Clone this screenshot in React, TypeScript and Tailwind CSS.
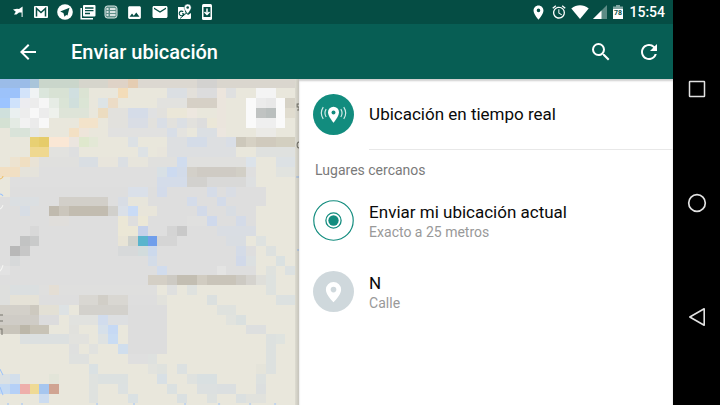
import React from "react";
import {
  MdAccessAlarm,
  MdArrowBack,
  MdImage,
  MdLocationOn,
  MdMail,
  MdRefresh,
  MdSearch,
} from "react-icons/md";

// Map tiles: [row, first column, number of columns, colour, number of rows]
type Tile = [number, number, number, string, number?];

const tiles: Tile[] = [
  // large neighbourhood areas
  [9, 4, 22, "#dfdfdf"],
  [10, 1, 25, "#dfdfdf"],
  [11, 1, 26, "#dedede"],
  [12, 0, 27, "#dedede"],
  [13, 0, 26, "#dedede", 8],
  [21, 0, 4, "#dedfdd", 2],
  [21, 4, 12, "#dfdfde"],
  [22, 4, 13, "#dedede"],
  [23, 13, 4, "#dddddd", 5],
  [28, 13, 2, "#dfdfdf"],
  [3, 11, 9, "#e2e1dd", 2],
  [5, 11, 6, "#e1e1e0"],
  [6, 17, 7, "#dddfe1", 2],
  [8, 4, 22, "#e0e0de"],
  // top edge
  [0, 0, 3, "#9bbce8"], [0, 3, 1, "#a9c5da"], [0, 4, 4, "#cad6cb"], [0, 8, 3, "#d6d5cc"],
  [0, 11, 2, "#dfd3c7"], [0, 13, 1, "#e5cdb2"], [0, 14, 6, "#dcd8d1"], [0, 20, 2, "#d3d2d0"], [0, 22, 8, "#dad6ce"],
  [1, 0, 2, "#9cc2fa"], [1, 2, 1, "#d3e3fa"], [1, 3, 1, "#f0f3f4"], [1, 4, 1, "#dbe6dc"], [1, 5, 2, "#d8e2d4"],
  [1, 7, 1, "#d0dfe0"], [1, 8, 1, "#dbe3d3"], [1, 12, 1, "#f3dcb8"], [1, 17, 2, "#dbdfe3"], [1, 19, 1, "#e3e0da"],
  [1, 20, 2, "#dcdcdd"], [1, 22, 1, "#ece5dd"], [1, 23, 1, "#dfe0e0"], [1, 26, 2, "#f4f4f4"],
  [2, 0, 1, "#9cc4ff"], [2, 1, 1, "#cfe2fb"], [2, 2, 1, "#ececf0"], [2, 3, 1, "#ececec"], [2, 4, 1, "#f6f6f6"],
  [2, 5, 1, "#e6ece5"], [2, 6, 1, "#dae4d6"], [2, 7, 1, "#d0dfdc"], [2, 8, 1, "#dbe5d5"], [2, 10, 1, "#dde4e6"],
  [2, 11, 1, "#ecdcc6"], [2, 16, 3, "#e2e2df"], [2, 19, 3, "#d6d0c6"], [2, 22, 1, "#ebe5dd"], [2, 25, 1, "#fafafa"],
  [2, 26, 1, "#ebebeb"], [2, 27, 1, "#e8e8e8"], [2, 28, 1, "#fafafa"], [2, 29, 1, "#d6d2c6"],
  [3, 0, 1, "#cfe0dc"], [3, 1, 1, "#eaf0f0"], [3, 2, 1, "#ededed"], [3, 3, 1, "#f8f8f8"], [3, 4, 1, "#ececec"],
  [3, 5, 1, "#eef1ec"], [3, 6, 3, "#dee4d8"], [3, 10, 1, "#ecdcc0"], [3, 13, 2, "#d5dce8"], [3, 17, 2, "#ebe7d8"],
  [3, 15, 1, "#e0e1e2"], [3, 19, 1, "#ede7df"], [3, 22, 1, "#ebe5dd"], [3, 25, 1, "#fafafa"], [3, 26, 1, "#c0c3c2"], [3, 27, 1, "#babfbe"],
  [3, 28, 1, "#fafafa"], [3, 29, 1, "#e0dccf"],
  [4, 0, 1, "#d4e1d3"], [4, 1, 1, "#e4ebe4"], [4, 2, 1, "#f2f2f2"], [4, 3, 1, "#ebebeb"], [4, 4, 1, "#f8f8f8"],
  [4, 8, 2, "#f3e3ca"], [4, 13, 2, "#d9dde5"], [4, 16, 1, "#d9dee6"], [4, 18, 1, "#dbdfe4"], [4, 20, 1, "#dddddd"],
  [4, 21, 1, "#ebe7d8"], [4, 22, 1, "#ebe5dd"], [4, 25, 1, "#fafafa"], [4, 26, 2, "#efefef"], [4, 28, 1, "#fafafa"],
  [5, 1, 2, "#d9e3d9"], [5, 3, 1, "#e6e8e6"], [5, 7, 1, "#f3e0c4"], [5, 8, 1, "#eee5da"], [5, 17, 1, "#d8dee7"],
  [5, 18, 1, "#e4e3df"], [5, 20, 2, "#dbdfe3"], [5, 22, 1, "#ece6df"], [5, 26, 2, "#ebeae6"],
  [6, 3, 1, "#e8d073"], [6, 4, 1, "#e6cc6a"], [6, 5, 2, "#fae7d5"], [6, 7, 1, "#ebe5df"], [6, 8, 1, "#dfe8cd"],
  [6, 9, 1, "#e3e8d6"], [6, 13, 1, "#dce1e5"], [6, 19, 2, "#d4dce8"], [6, 23, 1, "#d9dee6"],
  [6, 24, 1, "#cdc8bb"], [6, 25, 1, "#d6d1c4"], [6, 26, 2, "#d0cabd"], [6, 28, 2, "#d3cfc0"],
  [7, 3, 2, "#efd890"], [7, 5, 2, "#e2e2df"], [7, 7, 1, "#dedfe0"], [7, 14, 1, "#dde2e5"], [7, 16, 1, "#e8e5dc"],
  [7, 26, 4, "#dfe1df"],
  [8, 1, 1, "#ede3d0"], [8, 2, 1, "#f0dfc2"], [8, 3, 1, "#e9e3d6"], [8, 8, 2, "#d9dee3"], [8, 10, 2, "#e8e5dc"],
  [8, 12, 1, "#dbdfe3"], [8, 13, 2, "#e7e5dc"], [8, 18, 1, "#d0dcee"], [8, 25, 1, "#dce3ea"], [8, 28, 2, "#dce1e4"],
  [9, 0, 2, "#f1dfc3"], [9, 2, 2, "#e5e3db"], [9, 16, 1, "#d8e0e5"], [9, 17, 1, "#ccdaf0"], [9, 18, 1, "#d2dbe9"],
  [9, 19, 1, "#d3d0c9"], [9, 20, 4, "#cfcbc4"], [9, 24, 1, "#d2cfc6"], [9, 28, 2, "#e1e3df"],
  [10, 16, 3, "#d4dce9"], [10, 19, 2, "#d2d1ce"], [10, 21, 4, "#d9d9d8"], [10, 25, 1, "#dee0e1"],
  [11, 13, 2, "#dae0e9"], [11, 16, 1, "#d3dbea"], [11, 21, 1, "#d5dce8"], [11, 23, 1, "#d9dde4"],
  [12, 1, 3, "#dbdfe2"], [12, 6, 5, "#d2cfc9"], [12, 12, 1, "#d8dde5"], [12, 13, 2, "#e7e5db"], [12, 19, 1, "#d4dcea"], [12, 22, 1, "#d3dbe9"],
  [13, 2, 1, "#d7dde5"], [13, 5, 1, "#c0baae"], [13, 6, 1, "#cbc6bc"], [13, 7, 4, "#c2bcb0"], [13, 11, 1, "#d1d0cc"],
  [13, 12, 1, "#dae0e8"], [13, 13, 1, "#c9dbf6"], [13, 14, 2, "#e8e5da"], [13, 20, 1, "#d2dae9"], [13, 23, 1, "#d8dde3"],
  [14, 5, 2, "#e0dedb"], [14, 12, 1, "#ebe7d6"], [14, 14, 1, "#ebe7d6"], [14, 19, 2, "#e0e0df"], [14, 21, 1, "#cfd9ec"], [14, 24, 1, "#d4dbe8"],
  [15, 3, 1, "#d8d8d8"], [15, 12, 2, "#ebe7d6"], [15, 14, 1, "#c5d1ea"], [15, 17, 1, "#d4d4d4"], [15, 18, 1, "#c9c9c9"], [15, 22, 4, "#d9dde3"],
  [16, 2, 1, "#c2c3c3"], [16, 3, 1, "#c9caca"], [16, 12, 1, "#e8e4d6"], [16, 13, 1, "#cfd2cd"], [16, 14, 1, "#59b4cd"],
  [16, 15, 1, "#709eeb"], [16, 16, 2, "#d5d5d5"], [16, 23, 2, "#d9dde2"], [16, 25, 1, "#e9e7dc"], [16, 26, 1, "#dee2e0"],
  [17, 1, 1, "#b8b8b8"], [17, 2, 1, "#c7c7c7"], [17, 12, 2, "#d7d9da"], [17, 14, 1, "#d2dcdd"], [17, 15, 1, "#ccd9ec"],
  [17, 24, 1, "#d4dbe7"], [17, 27, 1, "#dde1df"],
  [18, 1, 1, "#d7d9da"], [18, 15, 1, "#d3dce8"], [18, 24, 1, "#d1d9e9"], [18, 25, 1, "#dce0e1"], [18, 28, 1, "#dae1e1"],
  [19, 0, 1, "#e2e2e2"], [19, 16, 1, "#d1dced"], [19, 22, 1, "#e4e4e3"], [19, 27, 1, "#dfe2de"], [19, 29, 1, "#dce1e1"],
  [20, 15, 2, "#d4cfc5"], [20, 17, 1, "#cdcac3"], [20, 18, 2, "#c3beb2"], [20, 20, 1, "#d1ccc1"], [20, 21, 3, "#c9c4b9"],
  [20, 24, 1, "#cdcac3"], [20, 25, 1, "#d5d3ce"], [20, 26, 1, "#dfdfda"], [20, 27, 1, "#dee2df"],
  [21, 1, 3, "#dbdfe0"], [21, 5, 1, "#e4ded4"], [21, 17, 1, "#dfe0df"], [21, 19, 1, "#dfe2df"], [21, 27, 1, "#dee2df"],
  [22, 1, 3, "#e5e2d7"], [22, 8, 5, "#d9d7d2"], [22, 10, 1, "#d1cec7"], [22, 16, 1, "#e2e2dc"], [22, 21, 1, "#dbe0df"], [22, 28, 2, "#dce1e0"],
  [23, 0, 3, "#d3d0c9"], [23, 3, 1, "#cdc9bf"], [23, 4, 2, "#e3e0d5"], [23, 6, 1, "#dde2e4"], [23, 8, 5, "#d3d1cc"], [23, 22, 2, "#dfe2de"],
  [24, 0, 4, "#cfccc6"], [24, 4, 2, "#dcdcdd"], [24, 7, 3, "#e1e2df"], [24, 10, 1, "#d1dced"], [24, 11, 2, "#dddfe1"], [24, 23, 1, "#e1e3de"], [24, 24, 1, "#dae0df"],
  [25, 0, 2, "#c9c5bb"], [25, 2, 1, "#bcb7a9"], [25, 3, 2, "#c8c3b6"], [25, 7, 1, "#e1e1dd"], [25, 10, 1, "#d6e0ea"], [25, 11, 1, "#c6d9f4"], [25, 25, 2, "#dddfdf"],
  [26, 2, 5, "#dce0e0"], [26, 7, 2, "#e2e2de"], [26, 10, 1, "#dee2e2"], [26, 11, 1, "#c9dcf3"], [26, 27, 1, "#dde1df", 4], [26, 28, 1, "#dfe3df"],
  [27, 7, 1, "#dfe0df"], [27, 9, 1, "#e1e2df"], [27, 12, 1, "#d0deed"],
  [28, 7, 2, "#dfe1df"], [28, 15, 1, "#dee1df"],
  [29, 9, 1, "#dae1e3"], [29, 15, 1, "#e2e3de"], [29, 16, 1, "#dfe2de"], [29, 18, 1, "#dce1e1"], [29, 26, 1, "#e5e4da"],
  [30, 1, 1, "#d3dfeb"], [30, 0, 1, "#dbe1e4"], [30, 5, 1, "#e3e5d9"], [30, 9, 1, "#dfe2df", 3], [30, 10, 3, "#dce1e0"],
  [30, 16, 1, "#d8e0e5"], [30, 19, 1, "#dfe2df"], [30, 20, 2, "#d9e0e1"], [30, 26, 1, "#dde1df"],
  [31, 0, 1, "#c5daf3"], [31, 1, 1, "#b5d0f7"], [31, 2, 1, "#eeafab"], [31, 3, 1, "#efda95"], [31, 4, 1, "#a6c6ef"],
  [31, 5, 1, "#d0a492"], [31, 12, 1, "#dce1e1"], [31, 17, 1, "#dbe1e1"], [31, 20, 2, "#dce0e0"], [31, 22, 2, "#dbdfe0"], [31, 26, 1, "#dcdfdf"],
  [32, 4, 1, "#ccdcf0"], [32, 13, 1, "#dae1e3"], [32, 18, 1, "#dae0e1"], [32, 21, 1, "#dde1df"], [32, 24, 1, "#dbe0e0"], [32, 25, 2, "#e1e2dd"],
];

function LocationMap() {
  return (
    <svg
      className="absolute inset-0 size-full"
      viewBox="0 0 299 326"
      preserveAspectRatio="xMinYMin slice"
      role="img"
      aria-label="Mapa"
    >
      <rect width="299" height="326" fill="#e9e7dc" />
      <g transform="translate(0 -0.7) scale(9.84 9.85)" shapeRendering="crispEdges">
        {tiles.map(([row, col, cols, color, rows = 1], i) => (
          <rect key={i} x={col} y={row} width={cols} height={rows} fill={color} />
        ))}
      </g>
      {/* street and river fragments along the edges */}
      <g fill="none" strokeWidth="1">
        <path d="M0 130q2-1 3-4M0 192q2-2 3-6" stroke="#f6f6f4" />
        <path d="M0 115q2 0 3 2M0 290l3 6M0 308l3 8" stroke="#9cc2fa" />
        <path d="M0 100q3-1 3-3" stroke="#f0c069" />
        <path d="M0 236h3M0 242h3M0 250h2v6" stroke="#77756c" />
        <path d="M299 25h-2v3h2v3h-2M299 63q-2 0-2 3t2 3" stroke="#77756c" />
        <path d="M296 98h3M297 171h2M7 325h2M21 325h2M96 325h2M133 325h2M184 325h2M218 325h2M249 325h2M274 325h2" stroke="#9cc2fa" />
      </g>
    </svg>
  );
}

function StatusBar() {
  return (
    <div className="flex h-6 shrink-0 items-center justify-between bg-[#054d44] pr-2 pl-[10px] text-white">
      <div className="flex w-[205px] items-center justify-between">
        <svg className="size-4" viewBox="0 0 16 16" fill="currentColor">
          <path d="M3 5.500l4-.8 2 .3 3.600-2.500v10.500h-1V8.500L9 8.500 6.500 10.500H4l1.800-2.800z" />
        </svg>
        <svg className="size-4" viewBox="0 0 16 16">
          <rect x="1" y="2" width="14" height="12" rx="1" fill="#fff" />
          <path d="M3.500 12.500V4.500L8 8.500l4.500-4v8" fill="none" stroke="#054d44" strokeWidth="1.500" />
        </svg>
        <svg className="size-4" viewBox="0 0 16 16">
          <circle cx="8" cy="8" r="7.800" fill="#fff" />
          <path d="M12.500 3.800L3.200 7.600l3.200 1.500 1.100 3.600 1.700-1.800 1.300.5z" fill="#054d44" />
        </svg>
        <svg className="size-4" viewBox="0 0 16 16">
          <path d="M1.200 4v10.800H13" fill="none" stroke="#fff" strokeWidth="1.500" />
          <rect x="3" y="1" width="12.500" height="11.500" rx="1" fill="#fff" />
          <path d="M5 4h8.500M5 6.700h8.500M5 9.500h5" stroke="#054d44" strokeWidth="1.300" />
        </svg>
        <svg className="size-4" viewBox="0 0 16 16" fill="none" stroke="#dce8e6">
          <rect x="2" y="2" width="12" height="12" rx="2.500" fill="#5f8f89" />
          <path d="M3.500 5h2M7 5h5.500M3.500 8h2M7 8h5.500M3.500 11h2M7 11h5.500" stroke="#fff" strokeWidth="1.500" />
        </svg>
        <MdImage className="size-[17px]" />
        <MdMail className="size-[18px]" />
        <svg className="size-4" viewBox="0 0 16 16">
          <path d="M2 3h7v5l3 3 3-2v5a1 1 0 0 1-1 1H3a1 1 0 0 1-1-1z" fill="#fff" />
          <path d="M4 14.500L14 6" stroke="#054d44" strokeWidth="1" />
          <path d="M7.200 7.800a2.300 2.300 0 1 0 .6 2H6" fill="none" stroke="#054d44" strokeWidth="1.100" />
          <path d="M11.700 0a3.500 3.500 0 0 0-3.500 3.500c0 2.500 3.500 6.300 3.500 6.300s3.500-3.800 3.500-6.300A3.500 3.500 0 0 0 11.700 0z" fill="#fff" stroke="#054d44" strokeWidth=".5" />
          <circle cx="11.700" cy="3.500" r="1.300" fill="#054d44" />
        </svg>
        <svg className="size-4" viewBox="0 0 16 16">
          <rect x="3" y="0" width="10" height="16" rx="1.500" fill="#fff" />
          <path d="M4.500 3h7v10h-7z" fill="#054d44" />
          <path d="M8 4.500v6M5.500 8L8 10.500 10.500 8" fill="none" stroke="#fff" strokeWidth="1.500" />
        </svg>
      </div>
      <div className="flex items-center gap-1">
        <MdLocationOn className="size-[17px]" />
        <MdAccessAlarm className="size-4" />
        <svg className="h-4 w-[18px]" viewBox="0 0 18 16" fill="currentColor">
          <path d="M9 15L.3 4.500C3 2.200 6 1.200 9 1.200s6 1 8.700 3.300z" />
        </svg>
        <svg className="h-4 w-[14px]" viewBox="1 0 14 16" fill="currentColor">
          <path d="M15 1v14H1z" opacity=".35" />
          <path d="M9.500 6.500V15H1z" />
        </svg>
        <svg className="h-4 w-[14px]" viewBox="1 0 14 16">
          <path d="M6 1h4v1.500h3V5H3V2.500h3z" fill="#82a6a2" />
          <path d="M3 5h10v10H3z" fill="#fff" />
          <text x="8" y="11" textAnchor="middle" fontFamily="Roboto, sans-serif" fontSize="7" fontWeight="700" fill="#054d44">78</text>
        </svg>
        <time className="text-sm leading-6 font-medium">15:54</time>
      </div>
    </div>
  );
}

function LiveIcon() {
  return (
    <svg className="size-[41px] shrink-0" viewBox="0 0 42 42">
      <circle cx="21" cy="21" r="21" fill="#128c7e" />
      <path d="M21 13a5.600 5.600 0 0 0-5.600 5.600c0 4.200 5.600 10.900 5.600 10.900s5.600-6.700 5.600-10.900a5.600 5.600 0 0 0-5.600-5.600z" fill="#fff" />
      <circle cx="21" cy="19" r="2" fill="#128c7e" />
      <path d="M13.500 15.500q-2.500 4 0 8M10.500 13.500q-4 6 0 12M28.500 15.500q2.500 4 0 8M31.500 13.500q4 6 0 12" fill="none" stroke="#d5ebe8" strokeWidth="1.200" />
    </svg>
  );
}

function CurrentIcon() {
  return (
    <svg className="size-[41px] shrink-0" viewBox="0 0 42 42" fill="none" stroke="#128c7e">
      <circle cx="21" cy="21" r="20.200" strokeWidth="1.200" />
      <circle cx="21" cy="21" r="7.800" strokeWidth="1.300" />
      <circle cx="21" cy="21" r="5.300" fill="#128c7e" stroke="none" />
    </svg>
  );
}

function PlaceIcon() {
  return (
    <svg className="size-[41px] shrink-0" viewBox="0 0 42 42">
      <circle cx="21" cy="21" r="21" fill="#cfd8dc" />
      <path d="M21 11.300a7.800 7.800 0 0 0-7.800 7.800C13.200 24.500 21 32 21 32s7.800-7.500 7.800-12.900a7.800 7.800 0 0 0-7.800-7.800z" fill="#fff" />
      <circle cx="21" cy="19" r="2.900" fill="#cfd8dc" />
    </svg>
  );
}

function PlaceRow({ icon, title, detail }: { icon: React.ReactNode; title: string; detail: string }) {
  return (
    <li>
      <button className="flex h-[71px] w-full items-center gap-[15px] pl-[14px] text-left">
        {icon}
        <span className="pt-[2px]">
          <span className="block text-[17px] leading-5 text-[#0a0a0a]">{title}</span>
          <span className="block text-sm leading-5 text-[#999]">{detail}</span>
        </span>
      </button>
    </li>
  );
}

export default function App() {
  return (
    <div className="flex h-screen bg-black font-['Roboto',sans-serif]">
      <div className="flex min-w-0 flex-1 flex-col bg-white">
        <StatusBar />
        <header className="flex h-[55px] shrink-0 items-center bg-[#075e54] pr-3 pl-4 text-white">
          <button aria-label="Atrás" className="mr-[31px]">
            <MdArrowBack className="size-6" />
          </button>
          <h1 className="flex-1 text-xl font-medium">Enviar ubicación</h1>
          <button aria-label="Buscar" className="mr-6">
            <MdSearch className="size-6" />
          </button>
          <button aria-label="Actualizar">
            <MdRefresh className="size-6" />
          </button>
        </header>
        <main className="flex min-h-0 flex-1">
          <div className="relative w-4/9 shrink-0 overflow-hidden">
            <LocationMap />
            <div className="absolute inset-y-0 right-0 w-1 bg-linear-to-r from-black/5 to-black/15" />
          </div>
          <section className="min-w-0 flex-1 bg-white inset-shadow-[0_2px_2px_#cfcfcf]">
            <button className="flex h-[71px] w-full items-center gap-[15px] pl-[14px] text-left">
              <LiveIcon />
              <span className="flex h-full flex-1 items-center border-b border-[#e8e8e8] pt-[2px] text-[17px] text-[#0a0a0a]">
                Ubicación en tiempo real
              </span>
            </button>
            <h2 className="pt-[10px] pb-[5px] pl-4 text-sm text-[#7a7a7a]">Lugares cercanos</h2>
            <ul>
              <PlaceRow icon={<CurrentIcon />} title="Enviar mi ubicación actual" detail="Exacto a 25 metros" />
              <PlaceRow icon={<PlaceIcon />} title="N" detail="Calle" />
            </ul>
          </section>
        </main>
      </div>
      <nav className="flex w-[47px] shrink-0 flex-col items-center justify-center gap-[90px] bg-black text-[#e2e2e2]">
        <button aria-label="Recientes">
          <svg className="size-6" viewBox="0 0 24 24" fill="none" stroke="currentColor" strokeWidth="1.500">
            <rect x="4.500" y="4.500" width="15" height="15" rx=".5" />
          </svg>
        </button>
        <button aria-label="Inicio">
          <svg className="size-6" viewBox="0 0 24 24" fill="none" stroke="currentColor" strokeWidth="1.700">
            <circle cx="12" cy="12" r="8.300" />
          </svg>
        </button>
        <button aria-label="Volver">
          <svg className="size-6" viewBox="0 0 24 24" fill="none" stroke="currentColor" strokeWidth="1.600" strokeLinejoin="round">
            <path d="M19.200 3.800v16.400L4.800 12z" />
          </svg>
        </button>
      </nav>
    </div>
  );
}
